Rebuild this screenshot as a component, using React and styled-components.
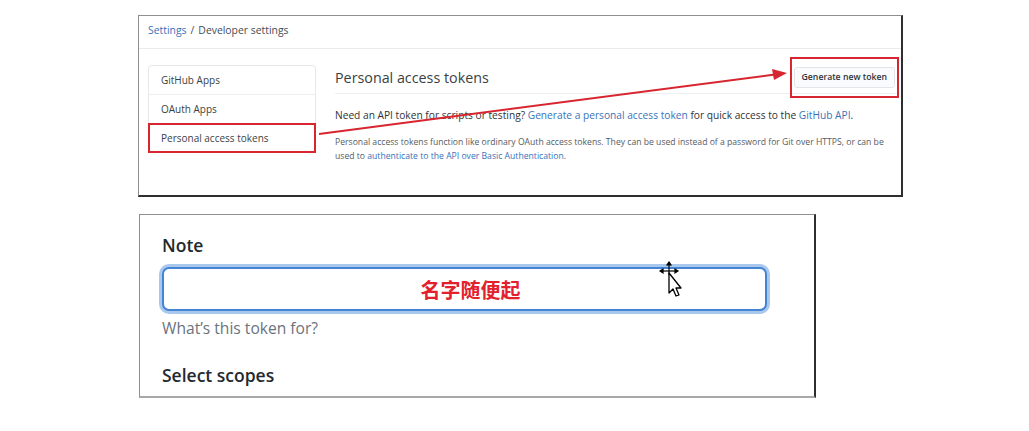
import styled, { createGlobalStyle } from 'styled-components'

const GlobalStyle = createGlobalStyle`
  html, body {
    margin: 0;
    padding: 0;
    background: #ffffff;
  }
  body {
    font-family: "Open Sans", "Noto Sans", sans-serif;
    color: #24292e;
  }
`

const Page = styled.div`
  width: 1029px;
  height: 431px;
  padding: 15px 0 0 138px;
  box-sizing: border-box;
  display: flex;
  flex-direction: column;
  gap: 17px;
`

const TopPanel = styled.div`
  position: relative;
  width: 765px;
  height: 182px;
  box-sizing: border-box;
  border: 1px solid #8f8f8f;
  border-right: 2px solid #2e2e2e;
  border-bottom: 2px solid #2e2e2e;
  background: #fff;
`

const Breadcrumb = styled.div`
  height: 33px;
  box-sizing: border-box;
  padding: 0 0 5px 9px;
  display: flex;
  align-items: center;
  gap: 4px;
  font-size: 10.4px;
  color: #444d56;
  border-bottom: 1px solid #e8eaed;
`

const Crumb = styled.a`
  color: #3a72b8;
  text-decoration: none;
`

const Body = styled.div`
  display: flex;
  align-items: flex-start;
  gap: 19px;
  padding: 16px 2px 0 9px;
`

const Sidebar = styled.nav`
  width: 168px;
  display: flex;
  flex-direction: column;
  border: 1px solid #e6e8eb;
  border-radius: 4px;
  box-sizing: border-box;
`

const SideItem = styled.div`
  height: 28px;
  display: flex;
  align-items: center;
  padding-left: 12px;
  font-size: 10px;
  color: #3b3f44;
  border-bottom: ${({ $last }) => ($last ? 'none' : '1px solid #eceef0')};
  outline: ${({ $marked }) => ($marked ? '2px solid #d7262f' : 'none')};
  outline-offset: -1px;
`

const Main = styled.section`
  flex: 1;
  display: flex;
  flex-direction: column;
`

const TitleRow = styled.div`
  height: 29px;
  box-sizing: border-box;
  padding-bottom: 4px;
  display: flex;
  align-items: center;
  justify-content: space-between;
  border-bottom: 1px solid #eceef0;
`

const Title = styled.h2`
  margin: 0;
  font-size: 14.3px;
  font-weight: 400;
  color: #3a3f44;
`

const Mark = styled.div`
  border: 2px solid #d7262f;
  padding: 8px 2px;
  margin: -8px 0 -8px 0;
`

const Button = styled.button`
  display: block;
  height: 21px;
  padding: 0 7px;
  font-family: inherit;
  font-size: 8.7px;
  font-weight: 600;
  color: #2f3338;
  background: #fafbfc;
  border: 1px solid #e2e4e7;
  border-radius: 3px;
`

const Lead = styled.p`
  margin: 14px 0 0;
  font-size: 10.2px;
  line-height: 14px;
  color: #2f3338;
  white-space: nowrap;
`

const Note = styled.p`
  margin: 13px 0 0;
  font-size: 8.65px;
  line-height: 14px;
  color: #555b62;
  width: 560px;
`

const Link = styled.a`
  color: #3a72b8;
  text-decoration: none;
`

const Overlay = styled.svg`
  position: absolute;
  left: 0;
  top: 0;
  pointer-events: none;
`

const BottomPanel = styled.div`
  position: relative;
  width: 677px;
  height: 184px;
  box-sizing: border-box;
  border: 1px solid #8f8f8f;
  border-right: 2px solid #2e2e2e;
  border-bottom: 2px solid #a8a8a8;
  padding: 17px 0 0 22px;
  margin-left: 1px;
  overflow: hidden;
`

const Label = styled.div`
  font-size: 17.5px;
  font-weight: 600;
  color: #24292e;
  line-height: 26px;
`

const NoteInput = styled.input`
  display: block;
  width: 605px;
  height: 44px;
  margin-top: 9px;
  box-sizing: border-box;
  border: 2px solid #4583d4;
  border-radius: 7px;
  box-shadow: 0 0 0 3px #a9c8ee;
  padding: 0 0 0 12px;
  text-align: center;
  font-family: "Noto Sans CJK SC", sans-serif;
  font-size: 20px;
  font-weight: 700;
  color: #e3212d;
  outline: none;
  background: #fff;
`

const Hint = styled.div`
  margin-top: 5px;
  font-size: 15.6px;
  color: #6a737d;
  line-height: 24px;
`

const Scopes = styled(Label)`
  margin-top: 22px;
`

const Cursor = styled.svg`
  position: absolute;
  left: 518px;
  top: 46px;
  pointer-events: none;
`

const MoveCursor = () => (
  <Cursor width="24" height="40" viewBox="0 0 24 40">
    <g stroke="#000" strokeWidth="1.2" fill="#000">
      <line x1="11" y1="2" x2="11" y2="14" />
      <line x1="3" y1="10" x2="19" y2="10" />
      <polygon points="11,1 9,4 13,4" />
      <polygon points="2,10 5,8 5,12" />
      <polygon points="20,10 17,8 17,12" />
    </g>
    <polygon
      points="11,12 11,32 15,28 18,35 21,34 18,27 23,27"
      fill="#fff"
      stroke="#000"
      strokeWidth="1.3"
      strokeLinejoin="round"
    />
  </Cursor>
)

export default function App() {
  return (
    <>
      <GlobalStyle />
      <Page>
        <TopPanel>
          <Breadcrumb>
            <Crumb href="#">Settings</Crumb>
            <span>/</span>
            <span>Developer settings</span>
          </Breadcrumb>
          <Body>
            <Sidebar>
              <SideItem>GitHub Apps</SideItem>
              <SideItem>OAuth Apps</SideItem>
              <SideItem $last $marked>Personal access tokens</SideItem>
            </Sidebar>
            <Main>
              <TitleRow>
                <Title>Personal access tokens</Title>
                <Mark>
                  <Button>Generate new token</Button>
                </Mark>
              </TitleRow>
              <Lead>
                Need an API token for scripts or testing?{' '}
                <Link href="#">Generate a personal access token</Link> for quick access to the{' '}
                <Link href="#">GitHub API</Link>.
              </Lead>
              <Note>
                Personal access tokens function like ordinary OAuth access tokens. They can be used instead of a
                password for Git over HTTPS, or can be used to{' '}
                <Link href="#">authenticate to the API over Basic Authentication</Link>.
              </Note>
            </Main>
          </Body>
          <Overlay width="765" height="182">
            <line x1="180" y1="118" x2="636" y2="58.5" stroke="#d7262f" strokeWidth="2" />
            <polygon points="648,57 633,53 635,64" fill="#d7262f" />
          </Overlay>
        </TopPanel>

        <BottomPanel>
          <Label>Note</Label>
          <NoteInput defaultValue="名字随便起" readOnly />
          <Hint>What’s this token for?</Hint>
          <Scopes>Select scopes</Scopes>
          <MoveCursor />
        </BottomPanel>
      </Page>
    </>
  )
}
